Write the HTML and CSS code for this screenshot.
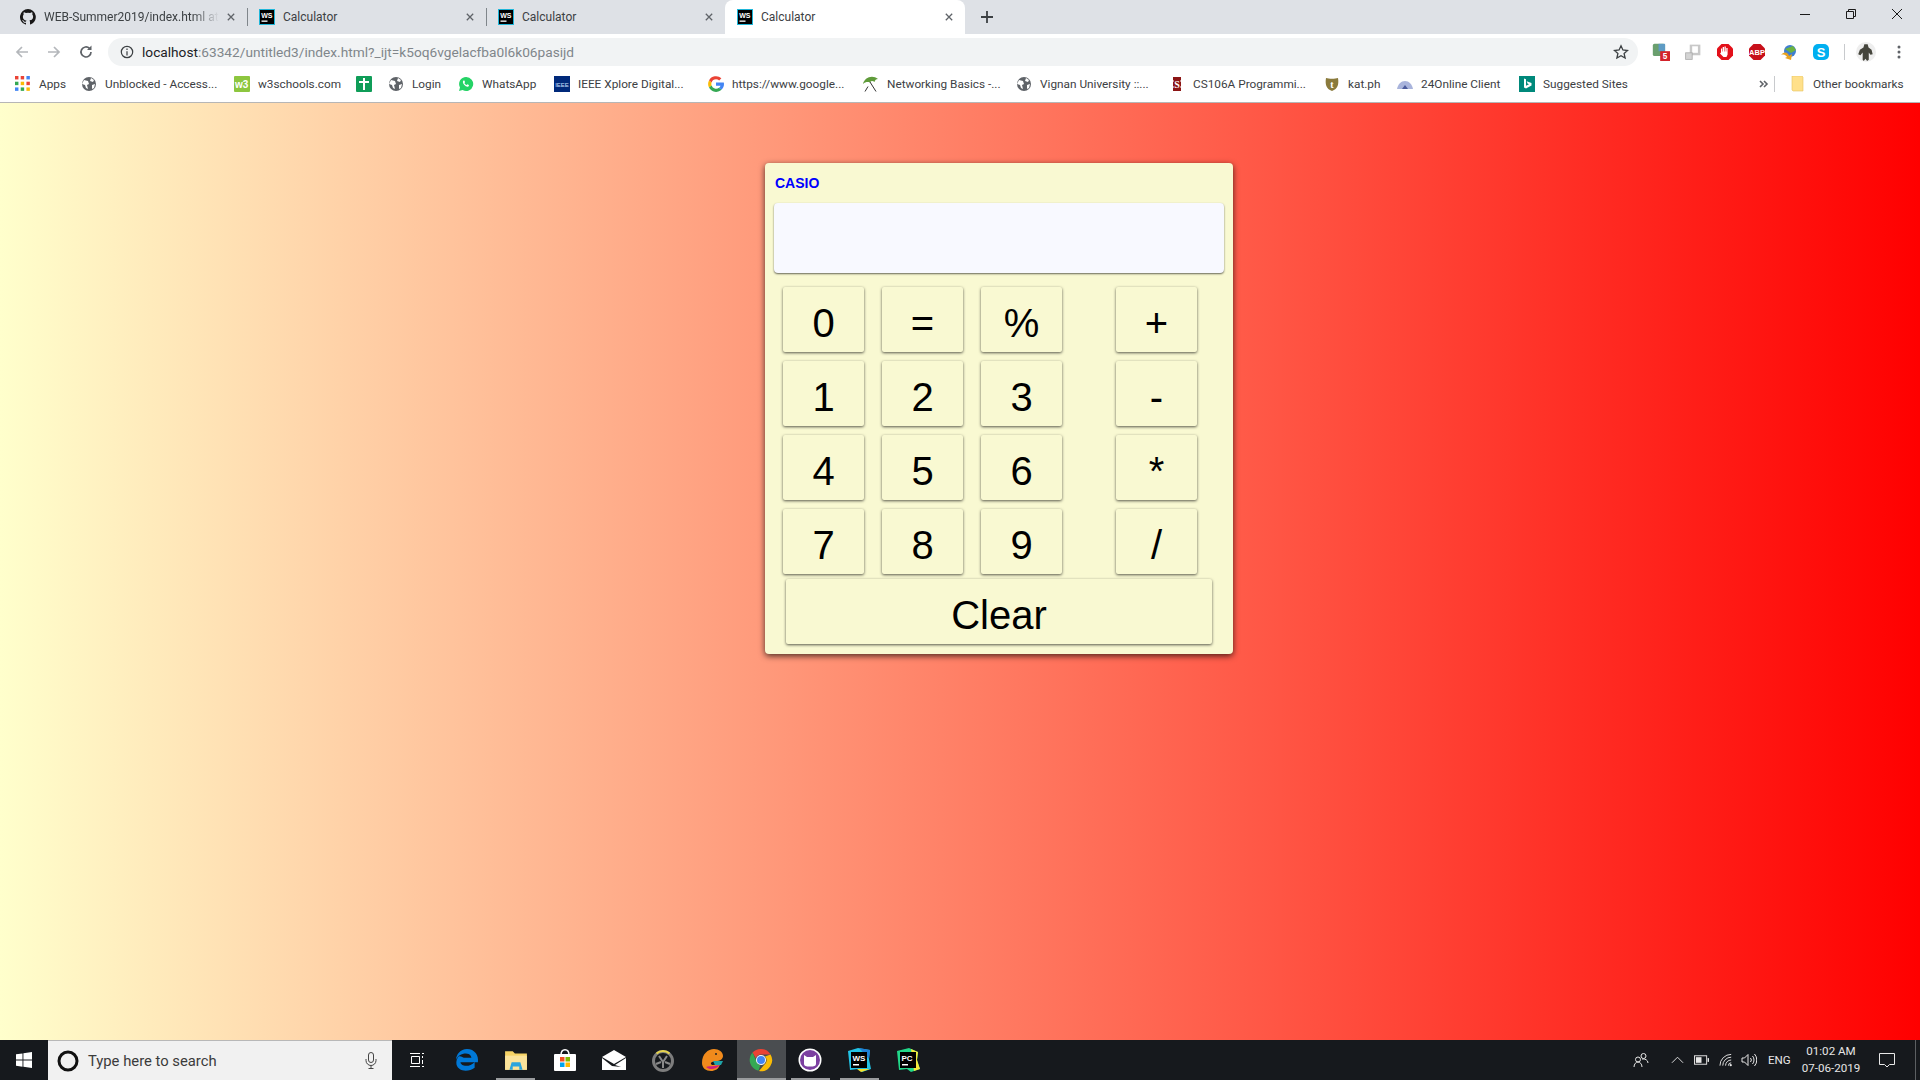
FILE: index.html
```html
<!DOCTYPE html>
<html lang="en">
<head>
<meta charset="utf-8">
<title>Calculator</title>
<link rel="stylesheet" href="styles.css">
</head>
<body>
<svg class="defs" width="0" height="0">
  <symbol id="globe" viewBox="0 0 16 16">
    <circle cx="8" cy="8" r="7" fill="#5f6368"/>
    <path d="M3 4l4 1 1 3-2 1 1 4-2-1-1-3-3-1zM10 2l3 2-1 2-3-1zM11 9l3-1-1 4-2 1z" fill="#fff"/>
  </symbol>
</svg>

<header class="tabstrip">
  <div class="tab">
    <svg class="fav" viewBox="0 0 16 16"><path fill="#181717" d="M8 0a8 8 0 0 0-2.500 15.600c.4.100.5-.2.5-.4v-1.400c-2.200.5-2.700-1-2.700-1-.4-.9-.9-1.200-.9-1.200-.7-.5.100-.5.100-.5.800.100 1.200.8 1.200.8.700 1.200 1.900.9 2.300.7.100-.5.300-.9.500-1.100-1.800-.2-3.600-.9-3.600-4 0-.9.300-1.600.8-2.100-.1-.2-.4-1 .1-2.100 0 0 .7-.2 2.200.8a7.600 7.600 0 0 1 4 0c1.500-1 2.200-.8 2.200-.8.400 1.100.2 1.900.1 2.100.5.500.8 1.200.8 2.100 0 3.100-1.900 3.700-3.700 3.900.3.300.6.800.6 1.500v2.200c0 .2.100.5.600.4A8 8 0 0 0 8 0z"/></svg>
    <span class="tab-title fade">WEB-Summer2019/index.html at</span>
    <svg class="tab-x" viewBox="0 0 10 10"><path d="M1 1l8 8M9 1l-8 8"/></svg>
  </div>
  <div class="tab divided">
    <svg class="fav" viewBox="0 0 16 16"><rect x=".5" y=".5" width="15" height="15" fill="#000" stroke="#1fb6d9"/><text x="2.200" y="8.500" font-family="Liberation Sans" font-weight="700" font-size="7" fill="#fff">WS</text><rect x="2.500" y="11.500" width="6" height="1.300" fill="#fff"/></svg>
    <span class="tab-title">Calculator</span>
    <svg class="tab-x" viewBox="0 0 10 10"><path d="M1 1l8 8M9 1l-8 8"/></svg>
  </div>
  <div class="tab divided">
    <svg class="fav" viewBox="0 0 16 16"><rect x=".5" y=".5" width="15" height="15" fill="#000" stroke="#1fb6d9"/><text x="2.200" y="8.500" font-family="Liberation Sans" font-weight="700" font-size="7" fill="#fff">WS</text><rect x="2.500" y="11.500" width="6" height="1.300" fill="#fff"/></svg>
    <span class="tab-title">Calculator</span>
    <svg class="tab-x" viewBox="0 0 10 10"><path d="M1 1l8 8M9 1l-8 8"/></svg>
  </div>
  <div class="tab active">
    <svg class="fav" viewBox="0 0 16 16"><rect x=".5" y=".5" width="15" height="15" fill="#000" stroke="#1fb6d9"/><text x="2.200" y="8.500" font-family="Liberation Sans" font-weight="700" font-size="7" fill="#fff">WS</text><rect x="2.500" y="11.500" width="6" height="1.300" fill="#fff"/></svg>
    <span class="tab-title">Calculator</span>
    <svg class="tab-x" viewBox="0 0 10 10"><path d="M1 1l8 8M9 1l-8 8"/></svg>
  </div>
  <svg class="newtab" viewBox="0 0 12 12"><path d="M6 0v12M0 6h12"/></svg>
  <div class="winctl">
    <svg viewBox="0 0 12 12"><path d="M1 6.500h10"/></svg>
    <svg viewBox="0 0 12 12"><path d="M1.500 3.500h7v7h-7zM3.500 3.500v-2h7v7h-2"/></svg>
    <svg viewBox="0 0 12 12"><path d="M1 1l10 10M11 1L1 11"/></svg>
  </div>
</header>

<nav class="toolbar">
  <svg class="nav-ic dim" viewBox="0 0 16 16"><path d="M14 8H3M8 3L3 8l5 5"/></svg>
  <svg class="nav-ic dim" viewBox="0 0 16 16"><path d="M2 8h11M8 3l5 5-5 5"/></svg>
  <svg class="nav-ic" viewBox="0 0 16 16"><path d="M13 8a5 5 0 1 1-1.500-3.600"/><path class="solid" d="M13.500 1.500v4.500H9z"/></svg>
  <div class="omnibox">
    <svg class="info" viewBox="0 0 16 16"><circle cx="8" cy="8" r="6.500"/><path d="M8 7v5M8 4v1.600"/></svg>
    <span class="url"><span class="host">localhost</span>:63342/untitled3/index.html?_ijt=k5oq6vgelacfba0l6k06pasijd</span>
    <svg class="star" viewBox="0 0 16 16"><path d="M8 1.800l1.900 4.200 4.600.5-3.400 3 1 4.500L8 11.700 3.900 14l1-4.500-3.400-3 4.600-.5z"/></svg>
  </div>
  <div class="exts">
    <svg viewBox="0 0 22 22"><rect x="1" y="1" width="15" height="15" rx="2" fill="#6a9f6e"/><rect x="8" y="1" width="8" height="9" fill="#5e9bc4"/><rect x="10" y="10" width="12" height="12" fill="#d3222a"/><text x="13" y="20" font-family="Liberation Sans" font-weight="700" font-size="10" fill="#fff">5</text></svg>
    <svg viewBox="0 0 22 22"><rect x="7" y="2" width="13" height="13" fill="#c8c8c8"/><rect x="10" y="4" width="7" height="8" fill="#fff"/><rect x="2" y="12" width="8" height="8" fill="#d4d4d4" stroke="#aaa"/></svg>
    <svg viewBox="0 0 18 18"><path d="M5.500 1h7L17 5.500v7L12.500 17h-7L1 12.500v-7z" fill="#e3101a"/><path d="M5 9V5.500h1.200V8.500h.5V4h1.300v4.500h.5V3.500h1.300v5h.5V5h1.300v6.500L10.500 14H7.500L4 10.500l1-1z" fill="#fff"/></svg>
    <svg viewBox="0 0 18 18"><path d="M5.500 1h7L17 5.500v7L12.500 17h-7L1 12.500v-7z" fill="#c8101a"/><text x="9" y="11.800" text-anchor="middle" font-family="Liberation Sans" font-weight="700" font-size="7.500" fill="#fff">ABP</text></svg>
    <svg viewBox="0 0 18 18"><circle cx="10" cy="8" r="6" fill="#3f7fd0"/><path d="M5 6l8-3 3 4-5 3z" fill="#6cb33f"/><path d="M1 12c3-4 7-3 8 1l3-2-1 6-6-2 2-1c-1-2-3-3-6-2z" fill="#e9a21f"/></svg>
    <svg viewBox="0 0 18 18"><rect x="1" y="1" width="16" height="16" rx="5" fill="#00aff0"/><text x="9" y="14" text-anchor="middle" font-family="Liberation Sans" font-weight="700" font-size="13" fill="#fff">S</text></svg>
  </div>
  <i class="tool-sep"></i>
  <svg class="avatar" viewBox="0 0 18 18"><circle cx="9" cy="9" r="9" fill="#eee"/><path d="M7.500 2h3l.8 3 2.700 2 1 4-2 .5-1.500-2V16l-1.500 1-1.500-2-1.500 2-1-1V9.500L4 12l-2-1 1.500-4L6.700 5z" fill="#45453c"/></svg>
  <svg class="kebab" viewBox="0 0 4 16"><circle cx="2" cy="3" r="1.500"/><circle cx="2" cy="8" r="1.500"/><circle cx="2" cy="13" r="1.500"/></svg>
</nav>

<nav class="bookmarks">
  <a class="bm"><svg class="bm-ic" viewBox="0 0 14 14"><g fill="#ea4335"><rect width="3" height="3"/><rect x="5" width="3" height="3"/></g><rect x="10" width="3" height="3" fill="#4285f4"/><rect y="5" width="3" height="3" fill="#34a853"/><rect x="5" y="5" width="3" height="3" fill="#fbbc05"/><rect x="10" y="5" width="3" height="3" fill="#ea4335"/><rect y="10" width="3" height="3" fill="#4285f4"/><rect x="5" y="10" width="3" height="3" fill="#34a853"/><rect x="10" y="10" width="3" height="3" fill="#fbbc05"/></svg>Apps</a>
  <a class="bm"><svg class="bm-ic"><use href="#globe"/></svg>Unblocked - Access...</a>
  <a class="bm"><svg class="bm-ic" viewBox="0 0 16 16"><rect width="16" height="16" rx="1" fill="#8dc63f"/><text x="1" y="12" font-family="Liberation Sans" font-weight="700" font-size="10" fill="#fff">w3</text></svg>w3schools.com</a>
  <a class="bm"><svg class="bm-ic" viewBox="0 0 16 16"><rect width="16" height="16" rx="1" fill="#0f9d58"/><path d="M7 2h2v3h4v2H9v7H7V7H3V5h4z" fill="#fff"/></svg></a>
  <a class="bm"><svg class="bm-ic"><use href="#globe"/></svg>Login</a>
  <a class="bm"><svg class="bm-ic" viewBox="0 0 16 16"><path d="M8 1a7 7 0 0 0-6 10.500L1 15l3.600-1A7 7 0 1 0 8 1z" fill="#25d366"/><path d="M5.500 4.500c-1 1-.8 2.600.6 4.200 1.500 1.700 3.200 2.400 4.300 1.700.6-.4.600-1 .5-1.300l-1.500-.8-.8.800c-.9-.3-1.800-1.200-2.200-2.100l.7-.8-.7-1.600c-.3-.2-.6-.2-.9-.1z" fill="#fff"/></svg>WhatsApp</a>
  <a class="bm"><svg class="bm-ic" viewBox="0 0 16 16"><rect width="16" height="16" fill="#00297a"/><text x="8" y="10.500" text-anchor="middle" font-family="Liberation Sans" font-size="6" fill="#cfe0ff">IEEE</text></svg>IEEE Xplore Digital...</a>
  <a class="bm"><svg class="bm-ic" viewBox="0 0 16 16"><path d="M8 3.200a4.800 4.800 0 0 1 3.200 1.200l2.200-2.200A8 8 0 0 0 1 4.400l2.600 2A4.800 4.800 0 0 1 8 3.200z" fill="#ea4335"/><path d="M1 4.400a8 8 0 0 0 0 7.200l2.600-2a4.800 4.800 0 0 1 0-3.200z" fill="#fbbc05"/><path d="M1 11.600A8 8 0 0 0 13.500 13.800l-2.500-2a4.800 4.800 0 0 1-7.400-2.200z" fill="#34a853"/><path d="M15.800 6.500H8v3.200h4.500a4 4 0 0 1-1.500 2.100l2.500 2c1.500-1.400 2.500-3.500 2.500-5.800 0-.5-.1-1-.2-1.500z" fill="#4285f4"/></svg>https://www.google...</a>
  <a class="bm"><svg class="bm-ic" viewBox="0 0 16 16"><path d="M0 8C1 2 9-2 15 3c-2 0-3 1-3.500 3C10 4.500 8 4.500 7 6.500 5 5.500 2 6 0 8z" fill="#5f9b3a"/><path d="M7 6l6 9.500M2 15.500l3-5" stroke="#333" fill="none"/></svg>Networking Basics -...</a>
  <a class="bm"><svg class="bm-ic"><use href="#globe"/></svg>Vignan University ::...</a>
  <a class="bm"><svg class="bm-ic" viewBox="0 0 16 16"><path d="M4 1h8v3l-1 1 1 1v4l-1 1 1 1v3H4v-3l1-1-1-1V6l1-1-1-1z" fill="#8c1515"/><text x="8" y="11.500" text-anchor="middle" font-family="Liberation Serif" font-weight="700" font-size="10" fill="#fff">S</text></svg>CS106A Programmi...</a>
  <a class="bm"><svg class="bm-ic" viewBox="0 0 16 16"><path d="M2 2c3 1 9 1 12 0 1 6 0 11-6 13C2 13 1 8 2 2z" fill="#8a7a3c"/><text x="8" y="11.500" text-anchor="middle" font-family="Liberation Serif" font-weight="700" font-size="10" fill="#fff">t</text></svg>kat.ph</a>
  <a class="bm"><svg class="bm-ic" viewBox="0 0 16 16"><path d="M0 13c1-5 4-8 8-8s7 3 8 8z" fill="#a9b4dc"/><path d="M5 13l3-4 3 4z" fill="#4a5a9c"/></svg>24Online Client</a>
  <a class="bm"><svg class="bm-ic" viewBox="0 0 16 16"><rect width="16" height="16" fill="#00897b"/><path d="M5 2.500l2 .7v6.500l3-1.500-1.500-.8-.8-2.100 4.800 1.700v2.500l-5.500 3-2-1.100z" fill="#fff"/></svg>Suggested Sites</a>
  <svg class="chev" viewBox="0 0 10 8"><path d="M1 1l3 3-3 3M5 1l3 3-3 3"/></svg>
  <i class="bm-sep"></i>
  <a class="bm tight"><svg class="bm-ic" viewBox="0 0 16 16"><path d="M2 0h10l1 1v14H3l-1-1z" fill="#ffe08a" stroke="#e6c25e" stroke-width=".6"/></svg>Other bookmarks</a>
</nav>

<main class="page">
  <section class="calc">
    <h1 class="brand">CASIO</h1>
    <div class="display"></div>
    <div class="keys">
      <div class="row"><button class="key">0</button><button class="key">=</button><button class="key">%</button><button class="key op">+</button></div>
      <div class="row"><button class="key">1</button><button class="key">2</button><button class="key">3</button><button class="key op">-</button></div>
      <div class="row"><button class="key">4</button><button class="key">5</button><button class="key">6</button><button class="key op">*</button></div>
      <div class="row"><button class="key">7</button><button class="key">8</button><button class="key">9</button><button class="key op">/</button></div>
    </div>
    <button class="key clear">Clear</button>
  </section>
</main>

<footer class="taskbar">
  <div class="start"><svg viewBox="0 0 16 16"><path fill="#fff" d="M0 2.300l6.500-.9v6.200H0zM7.400 1.300L16 0v7.600H7.400zM0 8.500h6.500v6.200L0 13.800zM7.400 8.500H16V16l-8.600-1.200z"/></svg></div>
  <div class="search">
    <svg class="cortana" viewBox="0 0 22 22"><circle cx="11" cy="11" r="9" fill="none" stroke="#111" stroke-width="3"/></svg>
    <span class="search-text">Type here to search</span>
    <svg class="mic" viewBox="0 0 12 17"><rect x="3.500" y=".5" width="5" height="10" rx="2.500"/><path d="M1 7v1.500a5 5 0 0 0 10 0V7M6 13.500v3M3.500 16.500h5"/></svg>
  </div>
  <div class="apps">
    <div class="app first"><svg viewBox="0 0 16 16" fill="none" stroke="#fff"><path d="M1 1.500h10M13 1.500h2M2.500 4.500h8v7h-8zM13.500 4v2M13.500 8v4M1 14.500h10M13 14.500h2"/></svg></div>
    <div class="app"><svg viewBox="0 0 22 22"><path fill="#0078d7" d="M11 1C5 1 1 6 1 11c1-4 5-6 9-6 4 0 5 3 5 4H8c-2-1-3-2-5-1-2 3-3 8 1 11 4 3 10 2 14-1v-5c-3 3-7 4-10 3-2-.5-3-2-3-3h16c1-6-3-12-10-12z"/></svg></div>
    <div class="app on"><svg viewBox="0 0 22 22"><path d="M1 3h7l2 2h11v15H1z" fill="#f6d365"/><path d="M1 7h20v13H1z" fill="#fbe39a"/><path d="M7 13h8l2 7h-3v-3H8v3H5z" fill="#2aa4dd"/></svg></div>
    <div class="app"><svg viewBox="0 0 24 24"><path d="M8 7c0-7 8-7 8 0" fill="none" stroke="#fff" stroke-width="1.500"/><rect x="1" y="6" width="22" height="17" rx="1" fill="#fff"/><rect x="7" y="9" width="4.500" height="4.500" fill="#f25022"/><rect x="12.500" y="9" width="4.500" height="4.500" fill="#7fba00"/><rect x="7" y="14.500" width="4.500" height="4.500" fill="#00a4ef"/><rect x="12.500" y="14.500" width="4.500" height="4.500" fill="#ffb900"/></svg></div>
    <div class="app"><svg viewBox="0 0 24 20"><path d="M0 7L12 0l12 7-12 7z" fill="#fff"/><path d="M0 8v12h24V8L13 15l6 2-9-1z" fill="#fff"/></svg></div>
    <div class="app"><svg viewBox="0 0 24 24"><circle cx="12" cy="13" r="9.500" fill="none" stroke="#7d7d7d" stroke-width="3"/><path d="M5.500 5.500a10 10 0 0 1 13 0" fill="none" stroke="#e7d44a" stroke-width="2"/><path d="M8 8l4 6 4-6M12 14v6M5 16l5-2M19 16l-5-2" fill="none" stroke="#8a8a8a" stroke-width="2"/></svg></div>
    <div class="app"><svg viewBox="0 0 24 24"><path d="M2 15C2 6 8 1 14 1c5 0 9 3 9 7 0 3-3 5-7 5l-4 1c-2 1-1 3 1 3l7-1c-1 5-5 7-9 7-5 0-9-3-9-8z" fill="#f08a1c"/><path d="M6 19c3 3 10 3 14-2l-6 1c-3 .5-6 0-8 1z" fill="#d01f7a"/><path d="M13 13h10l-2 4h-6z" fill="#1fa3a8"/><circle cx="16" cy="6" r="1" fill="#222"/></svg></div>
    <div class="app active"><svg viewBox="0 0 24 24"><path d="M12 1a11 11 0 0 1 9.500 5.500H12a5.500 5.500 0 0 0-5.200 3.700L3.500 4.600A11 11 0 0 1 12 1z" fill="#ea4335"/><path d="M3.500 4.600L8.300 15a5.500 5.500 0 0 0 3 2.400L9.400 22.700A11 11 0 0 1 3.500 4.600z" fill="#34a853"/><path d="M21.500 6.500A11 11 0 0 1 10 23l5-5.900a5.500 5.500 0 0 0 1-8.600z" fill="#fbbc05"/><circle cx="12" cy="12" r="5" fill="#fff"/><circle cx="12" cy="12" r="4" fill="#4285f4"/></svg></div>
    <div class="app on"><svg viewBox="0 0 24 24"><circle cx="12" cy="12" r="11.500" fill="#fff"/><circle cx="12" cy="12" r="10" fill="#7b3fa0"/><path d="M6 7l3 2h6l3-2v9c0 2-2 2.500-6 2.500S6 18 6 16z" fill="#fff"/></svg></div>
    <div class="app on"><svg viewBox="0 0 24 24"><path d="M1 3l10-3 12 2-1 9 2 10-9 3-4-3-8 1z" fill="#22c3e6"/><path d="M12 0l11 2-1 9z" fill="#1f7fd6"/><path d="M14 24l-4-3 13 0z" fill="#f6e32c"/><rect x="4" y="4" width="16" height="16" fill="#000"/><text x="5.500" y="12.500" font-family="Liberation Sans" font-weight="700" font-size="8" fill="#fff">WS</text><rect x="6" y="16" width="6" height="1.500" fill="#fff"/></svg></div>
    <div class="app"><svg viewBox="0 0 24 24"><path d="M1 3l12-3 9 4-1 8 3 9-9 3-4-3-8 1z" fill="#21d789"/><path d="M15 1l7 3-1 8 3 9-6 2z" fill="#f7ea3c"/><rect x="4" y="4" width="16" height="16" fill="#000"/><text x="5.500" y="12.500" font-family="Liberation Sans" font-weight="700" font-size="8" fill="#fff">PC</text><rect x="6" y="16" width="6" height="1.500" fill="#fff"/></svg></div>
  </div>
  <div class="tray">
    <svg class="t-people" viewBox="0 0 16 16"><circle cx="10.500" cy="4" r="2.500"/><circle cx="5" cy="7.500" r="2.500"/><path d="M1 15c0-3 2-5 4-5s4 2 4 5M9 7c3-.5 6 1 6 4"/></svg>
    <svg class="t-caret" viewBox="0 0 14 8"><path d="M1 7l6-6 6 6"/></svg>
    <svg class="t-batt" viewBox="0 0 16 10"><rect x=".5" y=".5" width="13" height="9"/><rect class="fill" x="2" y="2" width="6" height="6"/><rect class="fill" x="14.500" y="3" width="1.500" height="4"/></svg>
    <svg class="t-wifi" viewBox="0 0 16 14"><path d="M1 13A12 12 0 0 1 13 1M4 13a9 9 0 0 1 9-9M7 13a6 6 0 0 1 6-6M10 13a3 3 0 0 1 3-3"/><circle class="fill" cx="12.500" cy="12.500" r="1.200"/></svg>
    <svg class="t-vol" viewBox="0 0 16 14"><path d="M1 5v4h2.500L7 12.500v-11L3.500 5zM9.500 5a3 3 0 0 1 0 4M11.500 3a6 6 0 0 1 0 8M13.500 1a9 9 0 0 1 0 12"/></svg>
    <span class="t-lang">ENG</span>
    <div class="t-clock"><span>01:02 AM</span><span>07-06-2019</span></div>
    <svg class="t-note" viewBox="0 0 16 15"><path d="M.5.500h15v11h-5l-2.500 2.500L5.500 11.500h-5z"/></svg>
    <i class="t-edge"></i>
  </div>
</footer>
</body>
</html>
```

FILE: styles.css
```css
* { box-sizing: border-box; }
html, body { margin: 0; height: 100%; }
body {
  width: 1920px;
  height: 1080px;
  display: flex;
  flex-direction: column;
  overflow: hidden;
  font-family: Roboto, "Liberation Sans", sans-serif;
}
.defs { position: absolute; }

/* tab strip */
.tabstrip {
  height: 34px;
  background: #dee1e6;
  display: flex;
  align-items: stretch;
  padding-left: 8px;
  flex: none;
}
.tab {
  width: 239px;
  display: flex;
  align-items: center;
  padding: 0 12px 0 12px;
  position: relative;
  font-size: 12px;
  color: #3c4043;
}
.tab.divided::before {
  content: "";
  position: absolute;
  left: 0;
  top: 8px;
  height: 18px;
  width: 1px;
  background: #80868b;
}
.tab.active {
  width: 240px;
  background: #fff;
  border-radius: 8px 8px 0 0;
}
.fav { width: 16px; height: 16px; flex: none; }
.tab-title {
  flex: 1;
  margin-left: 8px;
  white-space: nowrap;
  overflow: hidden;
}
.fade {
  -webkit-mask-image: linear-gradient(to right, #000 85%, transparent);
  mask-image: linear-gradient(to right, #000 85%, transparent);
}
.tab-x {
  width: 8px;
  height: 8px;
  flex: none;
  margin-left: 8px;
  fill: none;
  stroke: #5f6368;
  stroke-width: 1.6;
}
.newtab {
  width: 12px;
  height: 12px;
  align-self: center;
  margin-left: 16px;
  fill: none;
  stroke: #3c4043;
  stroke-width: 1.8;
}
.winctl {
  margin-left: auto;
  display: flex;
  align-items: flex-start;
  padding-top: 8px;
  padding-right: 17px;
  gap: 34px;
}
.winctl svg {
  width: 12px;
  height: 12px;
  fill: none;
  stroke: #1a1a1a;
  stroke-width: 1;
}

/* toolbar */
.toolbar {
  height: 32px;
  background: #fff;
  display: flex;
  align-items: flex-start;
  padding: 4px 0 0 14px;
  flex: none;
}
.nav-ic {
  width: 16px;
  height: 16px;
  margin: 6px 16px 0 0;
  fill: none;
  stroke: #5f6368;
  stroke-width: 1.7;
  flex: none;
}
.nav-ic.dim { stroke: #b4b7bb; }
.nav-ic .solid { fill: #5f6368; stroke: none; }
.omnibox {
  width: 1530px;
  height: 28px;
  margin-left: -2px;
  background: #f1f3f4;
  border-radius: 14px;
  display: flex;
  align-items: center;
  padding: 0 9px 0 12px;
  font-size: 13.700px;
  color: #80868b;
}
.info {
  width: 14px;
  height: 14px;
  fill: none;
  stroke: #3c4043;
  stroke-width: 1.400;
  flex: none;
}
.url { margin-left: 8px; flex: 1; white-space: nowrap; }
.host { color: #202124; }
.star {
  width: 16px;
  height: 16px;
  fill: none;
  stroke: #3c4043;
  stroke-width: 1.300;
}
.exts {
  display: flex;
  gap: 14px;
  margin: 5px 0 0 14px;
}
.exts svg { width: 18px; height: 18px; flex: none; }
.tool-sep {
  width: 1px;
  height: 16px;
  background: #c8cacd;
  margin: 6px 0 0 14px;
}
.avatar { width: 20px; height: 20px; margin: 4px 0 0 11px; flex: none; }
.kebab { width: 4px; height: 16px; margin: 6px 0 0 21px; fill: #5f6368; flex: none; }

/* bookmarks */
.bookmarks {
  height: 37px;
  padding-left: 15px;
  background: #fff;
  border-bottom: 1px solid #b6b6b6;
  display: grid;
  grid-template-columns: 66px 153px 122px 32px 70px 96px 154px 155px 153px 153px 155px 73px 122px 240px 15px 16px auto;
  align-items: center;
  font-size: 11.800px;
  color: #3c4043;
  flex: none;
}
.bm { display: flex; align-items: center; gap: 8px; white-space: nowrap; }
.bm.tight { gap: 7px; }
.bm-ic { width: 16px; height: 16px; flex: none; }
.chev {
  width: 10px;
  height: 8px;
  fill: none;
  stroke: #5f6368;
  stroke-width: 1.600;
}
.bm-sep { width: 1px; height: 16px; background: #c8cacd; }

/* page */
.page {
  flex: 1;
  min-height: 0;
  background: linear-gradient(to right, #ffffcc, #ff0000);
  padding: 60px 0 0 765px;
}
.calc {
  width: 468px;
  height: 491px;
  background: #f9f9d2;
  border-radius: 4px;
  box-shadow: 0 2px 6px rgba(0, 0, 0, .7);
  padding: 12px 9px 10px;
}
.brand {
  margin: 0 0 0 1px;
  height: 28px;
  font: 700 14px/16px "Liberation Sans", Arial, sans-serif;
  color: #0000ff;
}
.display {
  height: 70px;
  background: #f8f9ff;
  border-radius: 4px;
  box-shadow: 0 1px 2px rgba(0, 0, 0, .6);
}
.keys {
  display: flex;
  flex-direction: column;
  gap: 9px;
  margin: 14px 0 0 9px;
}
.row { display: flex; gap: 18px; }
.key {
  width: 81px;
  height: 65px;
  padding: 6px 0 0;
  border: 0;
  border-radius: 2px;
  background: #f9f9d2;
  box-shadow: 0 1px 3px rgba(0, 0, 0, .65);
  font: 40px/1 "Liberation Sans", Arial, sans-serif;
  color: #000;
}
.op { margin-left: 36px; }
.clear {
  display: block;
  width: 426px;
  margin: 5px 0 0 12px;
}

/* taskbar */
.taskbar {
  height: 40px;
  background: #16191d;
  display: flex;
  align-items: stretch;
  flex: none;
  color: #fff;
}
.start {
  width: 48px;
  display: flex;
  align-items: center;
  justify-content: center;
}
.start svg { width: 16px; height: 16px; }
.search {
  width: 344px;
  background: #f1f1f1;
  border-top: 1px solid #b8b8b8;
  display: flex;
  align-items: center;
  padding: 0 15px 0 9px;
}
.cortana { width: 22px; height: 22px; flex: none; }
.search-text {
  flex: 1;
  margin-left: 9px;
  font-size: 14.800px;
  color: #3b3b3b;
}
.mic {
  width: 12px;
  height: 17px;
  fill: none;
  stroke: #444;
  stroke-width: 1;
}
.apps { display: flex; }
.app {
  width: 49.100px;
  display: flex;
  align-items: center;
  justify-content: center;
  position: relative;
}
.app svg { width: 24px; height: 24px; }
.app.first { width: 50px; }
.app.first svg { width: 16px; height: 16px; }
.app.active { background: #4a4d50; }
.app.on::after, .app.active::after {
  content: "";
  position: absolute;
  left: 5px;
  right: 5px;
  bottom: 0;
  height: 2px;
  background: #9a9c9e;
}
.app.active::after { left: 0; right: 0; }
.tray {
  margin-left: auto;
  display: flex;
  align-items: center;
  position: relative;
  width: 289px;
  color: #e6e6e6;
  font-size: 11.600px;
}
.tray svg { fill: none; stroke: #e8e8e8; stroke-width: 1; flex: none; }
.tray .fill { fill: #e8e8e8; stroke: none; }
.t-people { width: 16px; height: 16px; margin-left: 2px; }
.t-caret { width: 13px; height: 8px; margin-left: 22px; }
.t-batt { width: 15px; height: 10px; margin-left: 10px; }
.t-wifi { width: 15px; height: 14px; margin-left: 10px; }
.t-vol { width: 16px; height: 14px; margin-left: 7px; }
.t-lang { margin-left: 11px; width: 26px; }
.t-clock {
  display: flex;
  flex-direction: column;
  align-items: center;
  width: 68px;
  margin-left: 3px;
  line-height: 17px;
}
.t-note { width: 16px; height: 15px; margin-left: 14px; }
.t-edge {
  position: absolute;
  right: 4px;
  top: 0;
  bottom: 0;
  width: 1px;
  background: #5c5f62;
}
```
